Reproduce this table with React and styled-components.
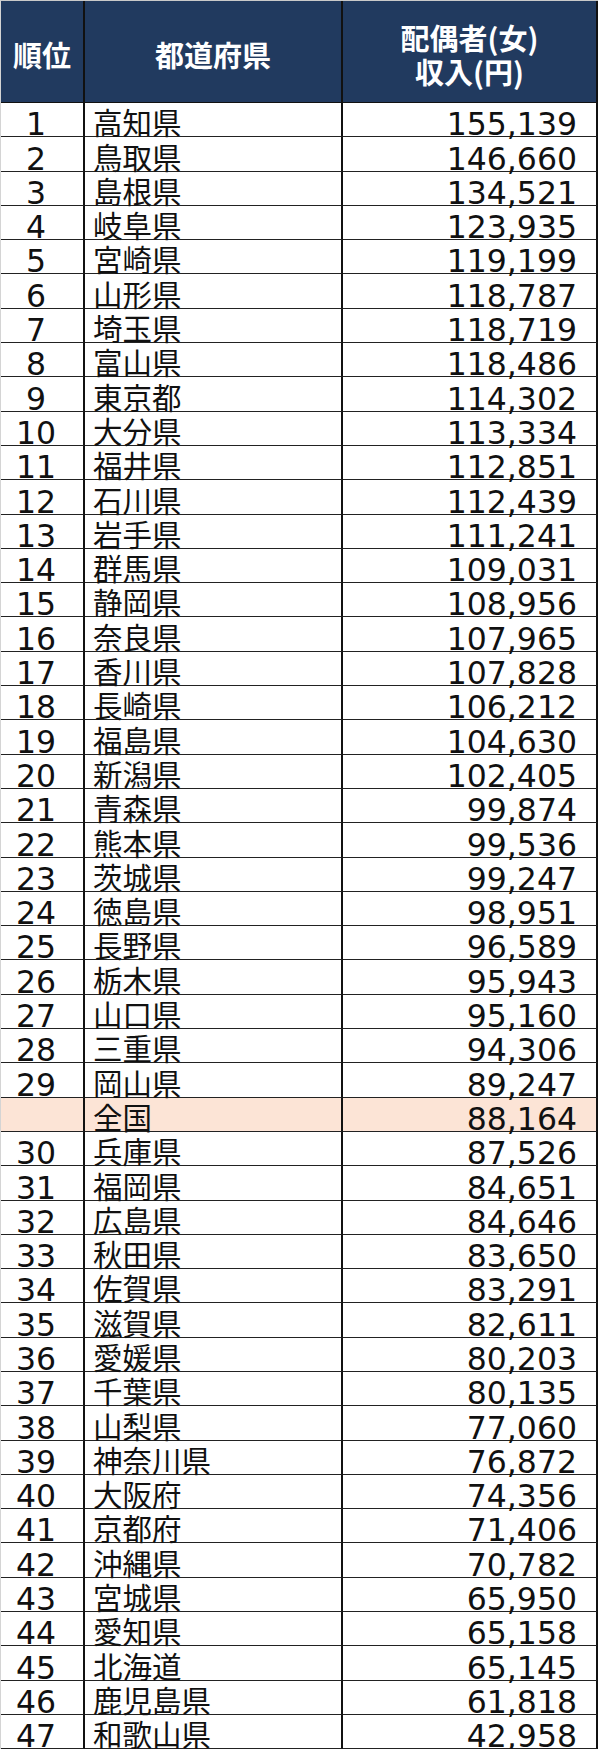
import React from "react";
import styled, { createGlobalStyle } from "styled-components";

const Global = createGlobalStyle`
  html, body { margin: 0; padding: 0; background: #ffffff; }
  body { font-family: "Noto Sans CJK JP", sans-serif; }
`;

const COLS = "84px 258px 255px";

const Table = styled.div`
  width: 598px;
  box-sizing: border-box;
  border-top: 1px solid #c9c9c9;
  border-left: 1px solid #d4d4d4;
  background: #fff;
`;

const HeaderRow = styled.div`
  display: grid;
  grid-template-columns: ${COLS};
  height: 102px;
  background: #213a5f;
`;

const HeadCell = styled.div`
  box-sizing: border-box;
  display: flex;
  flex-direction: column;
  align-items: center;
  justify-content: center;
  padding-top: 4px;
  border-right: 2px solid #111;
  border-bottom: 1px solid #111;
  color: #ffffff;
  font-family: "Noto Sans CJK JP", sans-serif;
  font-weight: 700;
  font-size: 29px;
  line-height: 34px;
  text-align: center;
`;

const Row = styled.div`
  display: grid;
  grid-template-columns: ${COLS};
  height: 34.3px;
  background: ${(p) => (p.$highlight ? "#fce4d6" : "#ffffff")};
`;

const Cell = styled.div`
  box-sizing: border-box;
  display: flex;
  align-items: flex-end;
  overflow: visible;
  border-right: 2px solid #111;
  border-bottom: 1px solid #222;
  color: #111;
  white-space: nowrap;
`;

const RankCell = styled(Cell)`
  justify-content: center;
  padding-right: 12px;
  font-family: "DejaVu Sans", "Noto Sans CJK JP", sans-serif;
  font-size: 31.5px;
  line-height: 24px;
`;

const NameCell = styled(Cell)`
  justify-content: flex-start;
  padding-left: 8px;
  font-family: "Noto Sans CJK JP", sans-serif;
  font-size: 29.5px;
  line-height: 30px;
`;

const ValueCell = styled(Cell)`
  justify-content: flex-end;
  padding-right: 19px;
  font-family: "DejaVu Sans", "Noto Sans CJK JP", sans-serif;
  font-size: 31.5px;
  line-height: 24px;
`;

const data = [
  ["1", "高知県", "155,139"],
  ["2", "鳥取県", "146,660"],
  ["3", "島根県", "134,521"],
  ["4", "岐阜県", "123,935"],
  ["5", "宮崎県", "119,199"],
  ["6", "山形県", "118,787"],
  ["7", "埼玉県", "118,719"],
  ["8", "富山県", "118,486"],
  ["9", "東京都", "114,302"],
  ["10", "大分県", "113,334"],
  ["11", "福井県", "112,851"],
  ["12", "石川県", "112,439"],
  ["13", "岩手県", "111,241"],
  ["14", "群馬県", "109,031"],
  ["15", "静岡県", "108,956"],
  ["16", "奈良県", "107,965"],
  ["17", "香川県", "107,828"],
  ["18", "長崎県", "106,212"],
  ["19", "福島県", "104,630"],
  ["20", "新潟県", "102,405"],
  ["21", "青森県", "99,874"],
  ["22", "熊本県", "99,536"],
  ["23", "茨城県", "99,247"],
  ["24", "徳島県", "98,951"],
  ["25", "長野県", "96,589"],
  ["26", "栃木県", "95,943"],
  ["27", "山口県", "95,160"],
  ["28", "三重県", "94,306"],
  ["29", "岡山県", "89,247"],
  ["", "全国", "88,164", true],
  ["30", "兵庫県", "87,526"],
  ["31", "福岡県", "84,651"],
  ["32", "広島県", "84,646"],
  ["33", "秋田県", "83,650"],
  ["34", "佐賀県", "83,291"],
  ["35", "滋賀県", "82,611"],
  ["36", "愛媛県", "80,203"],
  ["37", "千葉県", "80,135"],
  ["38", "山梨県", "77,060"],
  ["39", "神奈川県", "76,872"],
  ["40", "大阪府", "74,356"],
  ["41", "京都府", "71,406"],
  ["42", "沖縄県", "70,782"],
  ["43", "宮城県", "65,950"],
  ["44", "愛知県", "65,158"],
  ["45", "北海道", "65,145"],
  ["46", "鹿児島県", "61,818"],
  ["47", "和歌山県", "42,958"],
];

export default function App() {
  return (
    <>
      <Global />
      <Table>
        <HeaderRow>
          <HeadCell>順位</HeadCell>
          <HeadCell>都道府県</HeadCell>
          <HeadCell>
            <span>配偶者(女)</span>
            <span>収入(円)</span>
          </HeadCell>
        </HeaderRow>
        {data.map(([rank, name, value, hl]) => (
          <Row key={name} $highlight={!!hl}>
            <RankCell>{rank}</RankCell>
            <NameCell>{name}</NameCell>
            <ValueCell>{value}</ValueCell>
          </Row>
        ))}
      </Table>
    </>
  );
}
